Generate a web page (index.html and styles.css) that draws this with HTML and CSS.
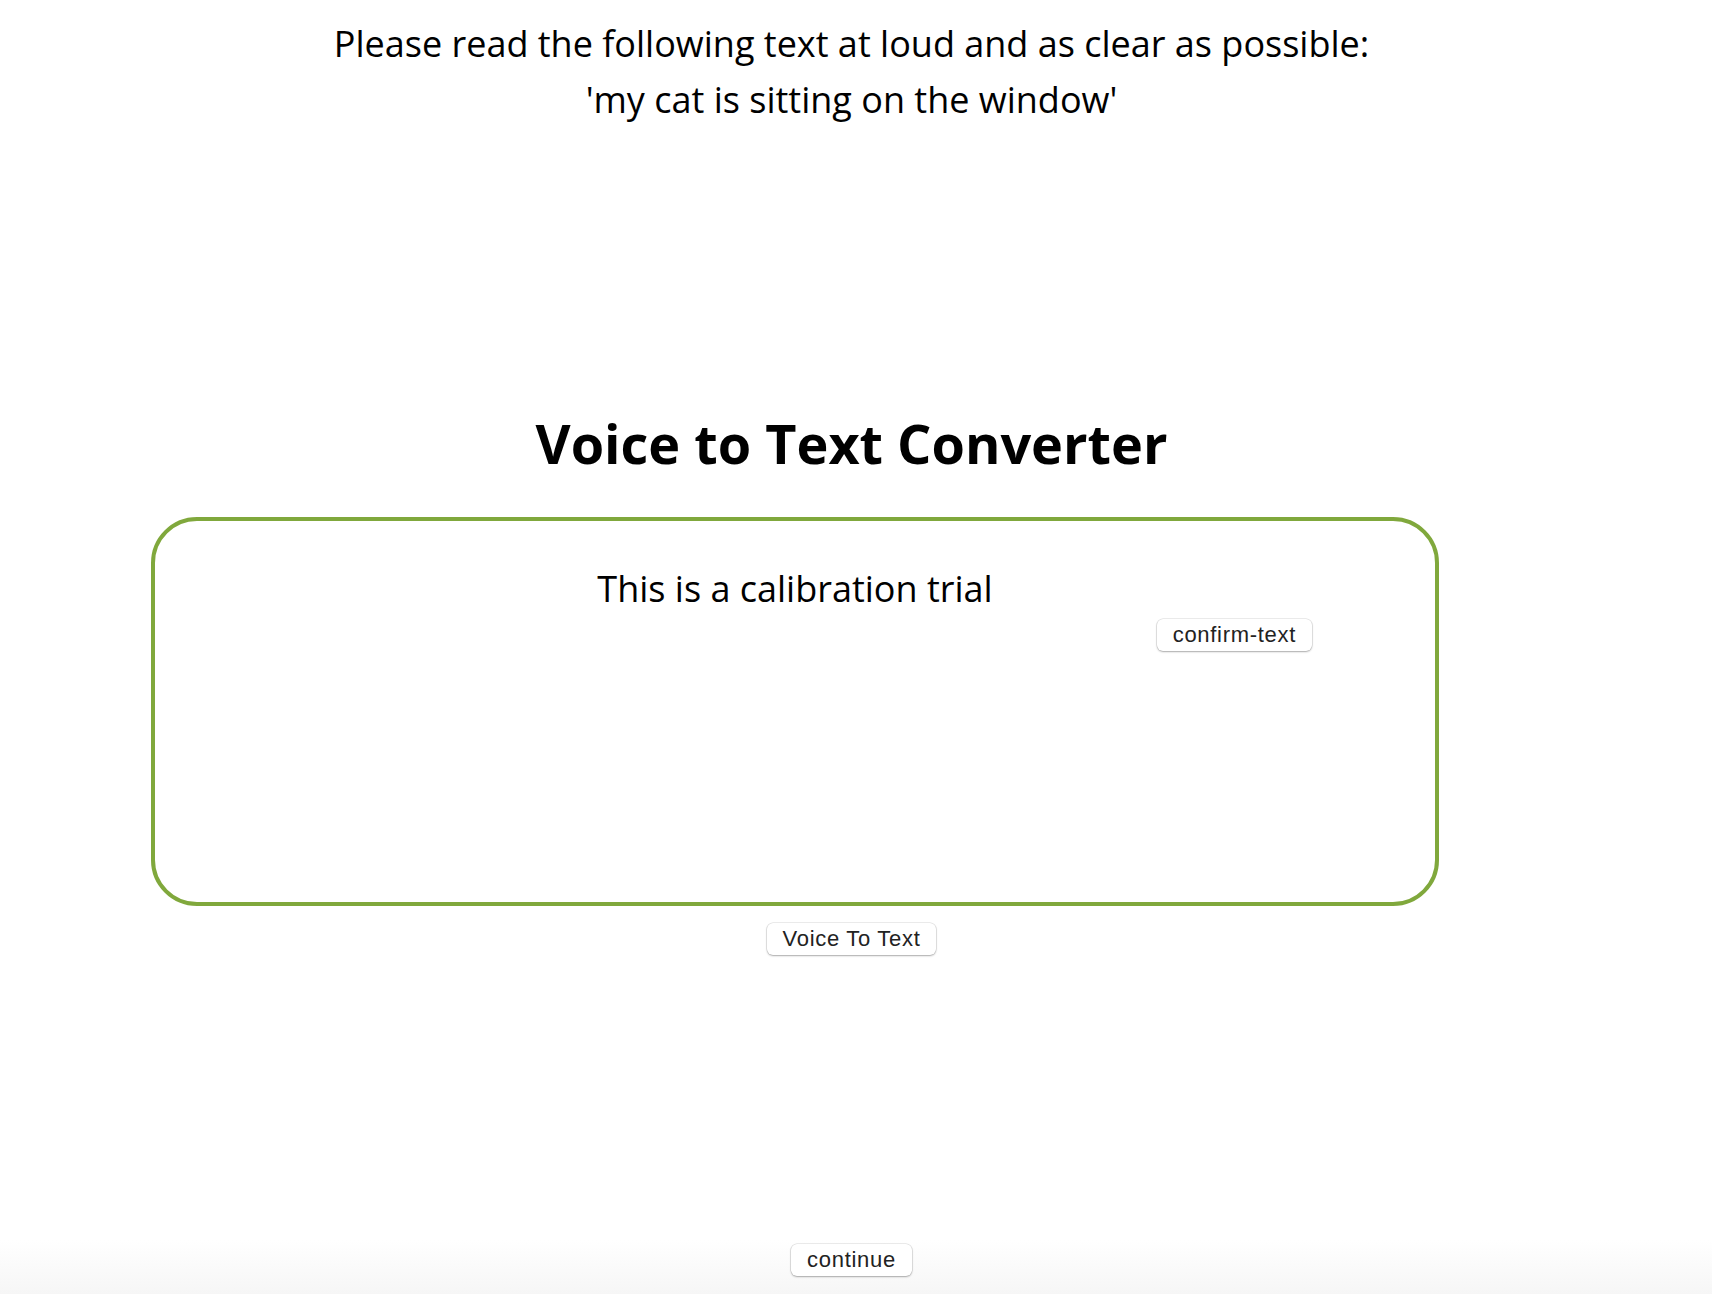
FILE: index.html
```html
<!DOCTYPE html>
<html lang="en">
<head>
<meta charset="utf-8">
<title>Voice to Text Converter</title>
<link rel="stylesheet" href="styles.css">
</head>
<body>
<div class="page">
  <div class="prompt">
    <p class="prompt-line">Please read the following text at loud and as clear as possible:</p>
    <p class="prompt-line">'my cat is sitting on the window'</p>
  </div>
  <h1 class="title">Voice to Text Converter</h1>
  <div class="box">
    <p class="result">This is a calibration trial</p>
    <div class="confirm-row">
      <button class="btn" type="button">confirm-text</button>
    </div>
  </div>
  <div class="center-row voice-row">
    <button class="btn" type="button">Voice To Text</button>
  </div>
  <div class="center-row continue-row">
    <button class="btn" type="button">continue</button>
  </div>
</div>
</body>
</html>
```
FILE: styles.css
```css
html, body {
  margin: 0;
  padding: 0;
}
body {
  min-height: 1294px;
  background: linear-gradient(to bottom, #ffffff 0, #ffffff 1240px, #f6f6f6 1294px);
  font-family: "Open Sans", "Noto Sans", sans-serif;
  color: #000;
}
.page {
  display: flex;
  flex-direction: column;
  padding-top: 16px;
  padding-right: 9px;
}
.prompt {
  display: flex;
  flex-direction: column;
  align-items: center;
}
.prompt-line {
  margin: 0;
  font-size: 36px;
  line-height: 56px;
  text-align: center;
}
.title {
  margin: 277px 0 0 0;
  font-size: 54px;
  font-weight: 700;
  line-height: 76px;
  text-align: center;
}
.box {
  box-sizing: border-box;
  margin: 36px 0 0 151px;
  width: 1288px;
  height: 389px;
  border: 4px solid #80a83c;
  border-radius: 46px;
  padding-top: 43px;
}
.result {
  margin: 0;
  font-size: 36px;
  line-height: 49px;
  text-align: center;
}
.confirm-row {
  display: flex;
  justify-content: flex-end;
  padding-right: 123px;
  margin-top: 6px;
}
.center-row {
  display: flex;
  justify-content: center;
}
.voice-row {
  margin-top: 17px;
}
.continue-row {
  margin-top: 289px;
}
.btn {
  box-sizing: border-box;
  height: 32px;
  padding: 0 16px;
  background: #ffffff;
  border: none;
  border-radius: 6px;
  box-shadow: 0 0 0 0.5px rgba(0, 0, 0, 0.14), 0 1px 2px rgba(0, 0, 0, 0.28);
  font-family: "Liberation Sans", Arial, sans-serif;
  font-size: 22px;
  letter-spacing: 0.7px;
  color: #222;
  line-height: 32px;
  cursor: pointer;
}
```
